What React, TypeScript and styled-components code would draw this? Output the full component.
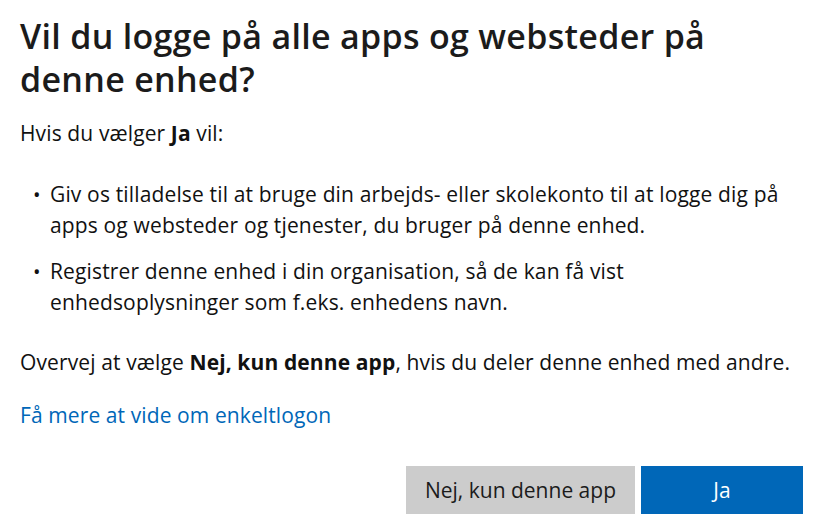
import React from "react";
import styled, { createGlobalStyle } from "styled-components";

const Global = createGlobalStyle`
  html, body { margin: 0; padding: 0; background: #fff; }
  body { font-family: "Open Sans", "Noto Sans", sans-serif; color: #1b1b1b; }
`;

const Page = styled.div`
  padding: 15px 18px 0 20px;
  width: 821px;
  box-sizing: border-box;
`;

const Title = styled.h1`
  margin: 0;
  font-size: 34px;
  font-weight: 600;
  line-height: 43px;
  letter-spacing: 0.3px;
  color: #1b1b1b;
`;

const Para = styled.p<{ $gap: number }>`
  margin: ${(p) => p.$gap}px 0 0;
  font-size: 21px;
  line-height: 31px;
  letter-spacing: 0.12px;
  color: #111;
`;

const List = styled.ul`
  margin: 30px 0 0;
  padding: 0;
  list-style: none;
  display: flex;
  flex-direction: column;
  gap: 15px;
  font-size: 21px;
  line-height: 31px;
  letter-spacing: 0.15px;
  color: #111;
`;

const Item = styled.li`
  display: flex;
`;

const Bullet = styled.span`
  flex: 0 0 30px;
  padding-left: 13px;
  box-sizing: border-box;
  font-size: 20px;
`;

const Link = styled.a`
  display: block;
  margin-top: 22px;
  font-size: 21px;
  line-height: 31px;
  letter-spacing: 0.1px;
  color: #0067b8;
  text-decoration: none;
`;

const Buttons = styled.div`
  display: flex;
  justify-content: flex-end;
  gap: 6px;
  margin-top: 35px;
`;

const Button = styled.button<{ $primary?: boolean }>`
  height: 48px;
  min-width: 162px;
  padding: 0 19px;
  border: none;
  font-family: inherit;
  font-size: 21px;
  background: ${(p) => (p.$primary ? "#0067b8" : "#cccccc")};
  color: ${(p) => (p.$primary ? "#fff" : "#1b1b1b")};
`;

export default function App() {
  return (
    <Page>
      <Global />
      <Title>Vil du logge på alle apps og websteder på denne enhed?</Title>
      <Para $gap={17}>
        Hvis du vælger <b>Ja</b> vil:
      </Para>
      <List>
        <Item>
          <Bullet>•</Bullet>
          <span>
            Giv os tilladelse til at bruge din arbejds- eller skolekonto til at logge dig på apps og websteder og tjenester, du bruger på denne enhed.
          </span>
        </Item>
        <Item>
          <Bullet>•</Bullet>
          <span>
            Registrer denne enhed i din organisation, så de kan få vist enhedsoplysninger som f.eks. enhedens navn.
          </span>
        </Item>
      </List>
      <Para $gap={29}>
        Overvej at vælge <b>Nej, kun denne app</b>, hvis du deler denne enhed med andre.
      </Para>
      <Link href="#">Få mere at vide om enkeltlogon</Link>
      <Buttons>
        <Button>Nej, kun denne app</Button>
        <Button $primary>Ja</Button>
      </Buttons>
    </Page>
  );
}
